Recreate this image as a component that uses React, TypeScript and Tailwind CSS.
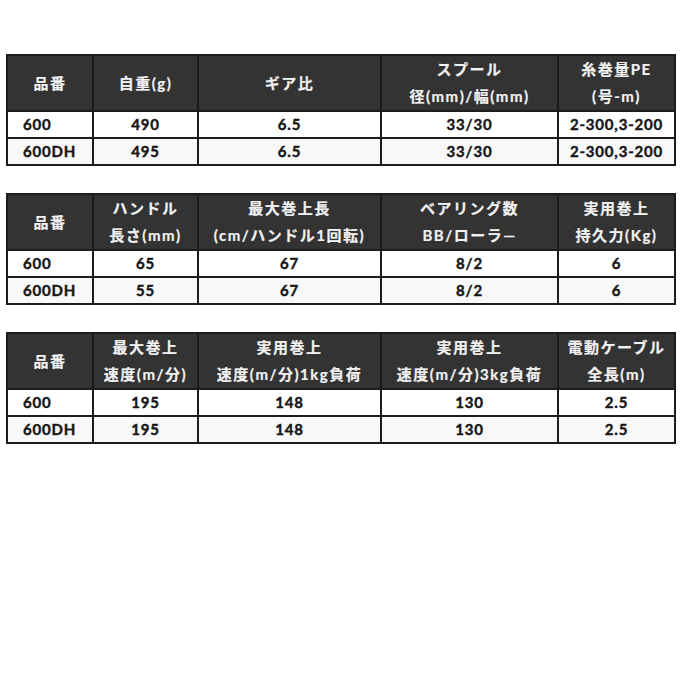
import React from "react";

type Spec = {
  head: string[][];
  rows: string[][];
};

const cols = ["w-[86px]", "w-[105px]", "w-[183px]", "w-[177px]", "w-[117px]"];

const tables: Spec[] = [
  {
    head: [["品番"], ["自重(g)"], ["ギア比"], ["スプール", "径(mm)/幅(mm)"], ["糸巻量PE", "(号-m)"]],
    rows: [
      ["600", "490", "6.5", "33/30", "2-300,3-200"],
      ["600DH", "495", "6.5", "33/30", "2-300,3-200"],
    ],
  },
  {
    head: [["品番"], ["ハンドル", "長さ(mm)"], ["最大巻上長", "(cm/ハンドル1回転)"], ["ベアリング数", "BB/ローラ―"], ["実用巻上", "持久力(Kg)"]],
    rows: [
      ["600", "65", "67", "8/2", "6"],
      ["600DH", "55", "67", "8/2", "6"],
    ],
  },
  {
    head: [["品番"], ["最大巻上", "速度(m/分)"], ["実用巻上", "速度(m/分)1kg負荷"], ["実用巻上", "速度(m/分)3kg負荷"], ["電動ケーブル", "全長(m)"]],
    rows: [
      ["600", "195", "148", "130", "2.5"],
      ["600DH", "195", "148", "130", "2.5"],
    ],
  },
];

function SpecTable({ spec }: { spec: Spec }) {
  return (
    <table className="table-fixed border-collapse border-2 border-[#1c1c1c] w-[668px]">
      <colgroup>
        {cols.map((c, i) => (
          <col key={i} className={c} />
        ))}
      </colgroup>
      <thead>
        <tr className="h-[53px] bg-[#333333]">
          {spec.head.map((lines, i) => (
            <th
              key={i}
              className="border-2 border-[#1c1c1c] text-center text-[15px] font-bold text-[#f2f2f2] leading-[27px] tracking-[1.5px] whitespace-nowrap p-0 [-webkit-text-stroke:0.2px_#f2f2f2]"
            >
              {lines.map((l, j) => (
                <div key={j}>{l}</div>
              ))}
            </th>
          ))}
        </tr>
      </thead>
      <tbody>
        {spec.rows.map((row, r) => (
          <tr key={r} className={r === 0 ? "h-[27px] bg-white" : "h-[27px] bg-[#f8f8f8]"}>
            {row.map((cell, i) => (
              <td
                key={i}
                className={
                  i === 0
                    ? "border-2 border-[#1c1c1c] text-left pl-[15px] text-[15px] font-bold tracking-[0.8px] text-[#151515] leading-[23px] p-0 [-webkit-text-stroke:0.4px_#151515]"
                    : "border-2 border-[#1c1c1c] text-center text-[15px] font-bold tracking-[0.8px] text-[#151515] leading-[23px] p-0 [-webkit-text-stroke:0.4px_#151515]"
                }
              >
                {cell}
              </td>
            ))}
          </tr>
        ))}
      </tbody>
    </table>
  );
}

export default function App() {
  return (
    <div
      className="w-[680px] h-[680px] bg-white pt-[54px] pl-[6px] flex flex-col gap-[27px]"
      style={{ fontFamily: 'Lato, "Noto Sans CJK JP", sans-serif' }}
    >
      {tables.map((t, i) => (
        <SpecTable key={i} spec={t} />
      ))}
    </div>
  );
}
